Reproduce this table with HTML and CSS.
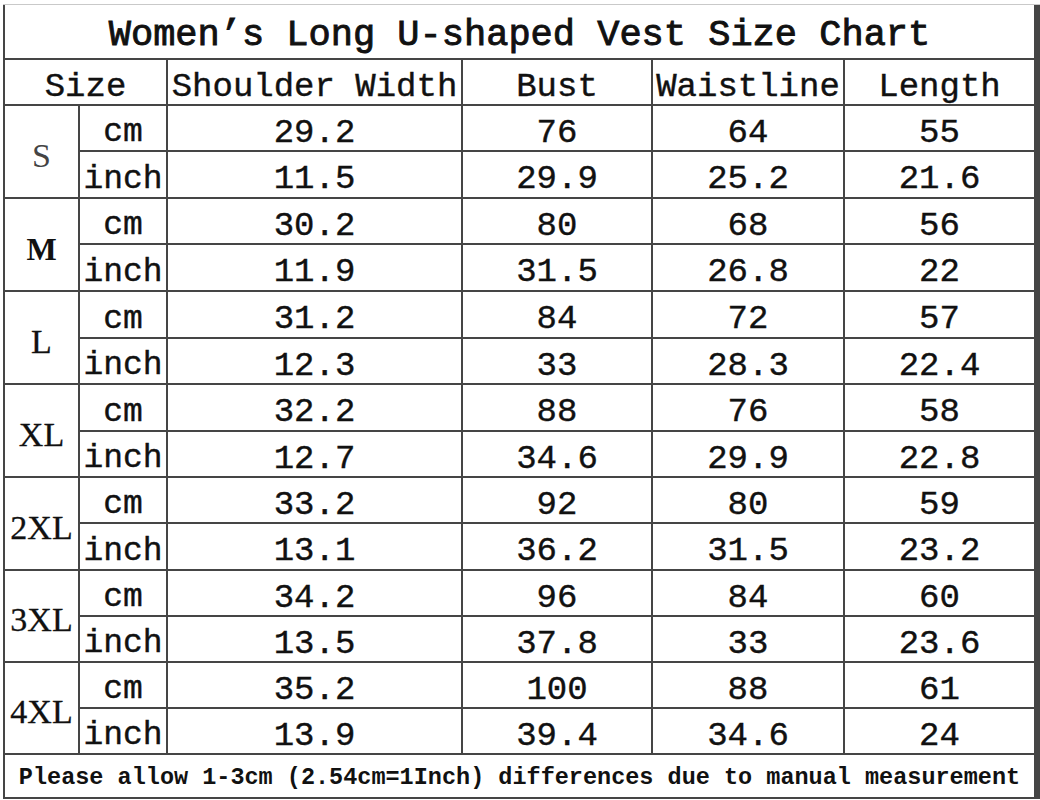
FILE: index.html
```html
<!DOCTYPE html>
<html lang="en">
<head>
<meta charset="utf-8">
<title>Women's Long U-shaped Vest Size Chart</title>
<link rel="stylesheet" href="styles.css">
</head>
<body>
<div class="sheet">
  <div class="chart">
    <div class="cell title">Women’s Long U-shaped Vest Size Chart</div>

    <div class="cell head span2">Size</div>
    <div class="cell head">Shoulder Width</div>
    <div class="cell head">Bust</div>
    <div class="cell head">Waistline</div>
    <div class="cell head">Length</div>

    <div class="cell size thin">S</div>
    <div class="cell unit">cm</div><div class="cell val">29.2</div><div class="cell val">76</div><div class="cell val">64</div><div class="cell val">55</div>
    <div class="cell unit">inch</div><div class="cell val">11.5</div><div class="cell val">29.9</div><div class="cell val">25.2</div><div class="cell val">21.6</div>

    <div class="cell size bold">M</div>
    <div class="cell unit">cm</div><div class="cell val">30.2</div><div class="cell val">80</div><div class="cell val">68</div><div class="cell val">56</div>
    <div class="cell unit">inch</div><div class="cell val">11.9</div><div class="cell val">31.5</div><div class="cell val">26.8</div><div class="cell val">22</div>

    <div class="cell size">L</div>
    <div class="cell unit">cm</div><div class="cell val">31.2</div><div class="cell val">84</div><div class="cell val">72</div><div class="cell val">57</div>
    <div class="cell unit">inch</div><div class="cell val">12.3</div><div class="cell val">33</div><div class="cell val">28.3</div><div class="cell val">22.4</div>

    <div class="cell size">XL</div>
    <div class="cell unit">cm</div><div class="cell val">32.2</div><div class="cell val">88</div><div class="cell val">76</div><div class="cell val">58</div>
    <div class="cell unit">inch</div><div class="cell val">12.7</div><div class="cell val">34.6</div><div class="cell val">29.9</div><div class="cell val">22.8</div>

    <div class="cell size">2XL</div>
    <div class="cell unit">cm</div><div class="cell val">33.2</div><div class="cell val">92</div><div class="cell val">80</div><div class="cell val">59</div>
    <div class="cell unit">inch</div><div class="cell val">13.1</div><div class="cell val">36.2</div><div class="cell val">31.5</div><div class="cell val">23.2</div>

    <div class="cell size">3XL</div>
    <div class="cell unit">cm</div><div class="cell val">34.2</div><div class="cell val">96</div><div class="cell val">84</div><div class="cell val">60</div>
    <div class="cell unit">inch</div><div class="cell val">13.5</div><div class="cell val">37.8</div><div class="cell val">33</div><div class="cell val">23.6</div>

    <div class="cell size">4XL</div>
    <div class="cell unit">cm</div><div class="cell val">35.2</div><div class="cell val">100</div><div class="cell val">88</div><div class="cell val">61</div>
    <div class="cell unit">inch</div><div class="cell val">13.9</div><div class="cell val">39.4</div><div class="cell val">34.6</div><div class="cell val">24</div>

    <div class="cell note">Please allow 1-3cm (2.54cm=1Inch) differences due to manual measurement</div>
  </div>
</div>
</body>
</html>
```

FILE: styles.css
```css
html, body {
  margin: 0;
  padding: 0;
  background: #ffffff;
}

.sheet {
  width: 1040px;
  height: 800px;
  background: #ffffff;
  padding-top: 4px;
  box-sizing: border-box;
}

.chart {
  margin-left: 3px;
  width: 1033px;
  display: grid;
  grid-template-columns: 73px 86px 293px 188px 190px 189px;
  grid-template-rows: 53px 44px 44px 45px 44px 45px 45px 44px 45px 44px 44px 45px 44px 44px 44px 44px 42px;
  gap: 2px;
  background: #454545;
  padding: 0 2px 2px 2px;
  border-top: 1px solid #c9c9c9;
  color: #111111;
  font-family: "Liberation Mono", "DejaVu Sans Mono", monospace;
}

.cell {
  background: #ffffff;
  display: flex;
  align-items: center;
  justify-content: center;
  white-space: nowrap;
  line-height: 1;
}

.title {
  grid-column: 1 / -1;
  font-size: 37px;
  -webkit-text-stroke: 0.9px #111;
  padding-top: 8px;
}

.head {
  font-size: 34px;
  -webkit-text-stroke: 0.4px #111;
  padding-top: 10px;
}

.span2 {
  grid-column: span 2;
}

.size {
  grid-row: span 2;
  font-family: "Liberation Serif", "Times New Roman", serif;
  font-size: 34px;
  -webkit-text-stroke: 0.3px #111;
  padding-top: 8px;
}

.size.thin {
  color: #444;
  -webkit-text-stroke: 0;
}

.size.bold {
  font-weight: bold;
  font-size: 32px;
  -webkit-text-stroke: 0;
}

.unit {
  font-size: 33px;
  -webkit-text-stroke: 0.4px #111;
  padding-top: 9px;
}

.val {
  font-size: 34px;
  -webkit-text-stroke: 0.4px #111;
  padding-top: 9px;
}

.note {
  grid-column: 1 / -1;
  font-size: 23.5px;
  font-weight: bold;
  padding-top: 4px;
}
```
